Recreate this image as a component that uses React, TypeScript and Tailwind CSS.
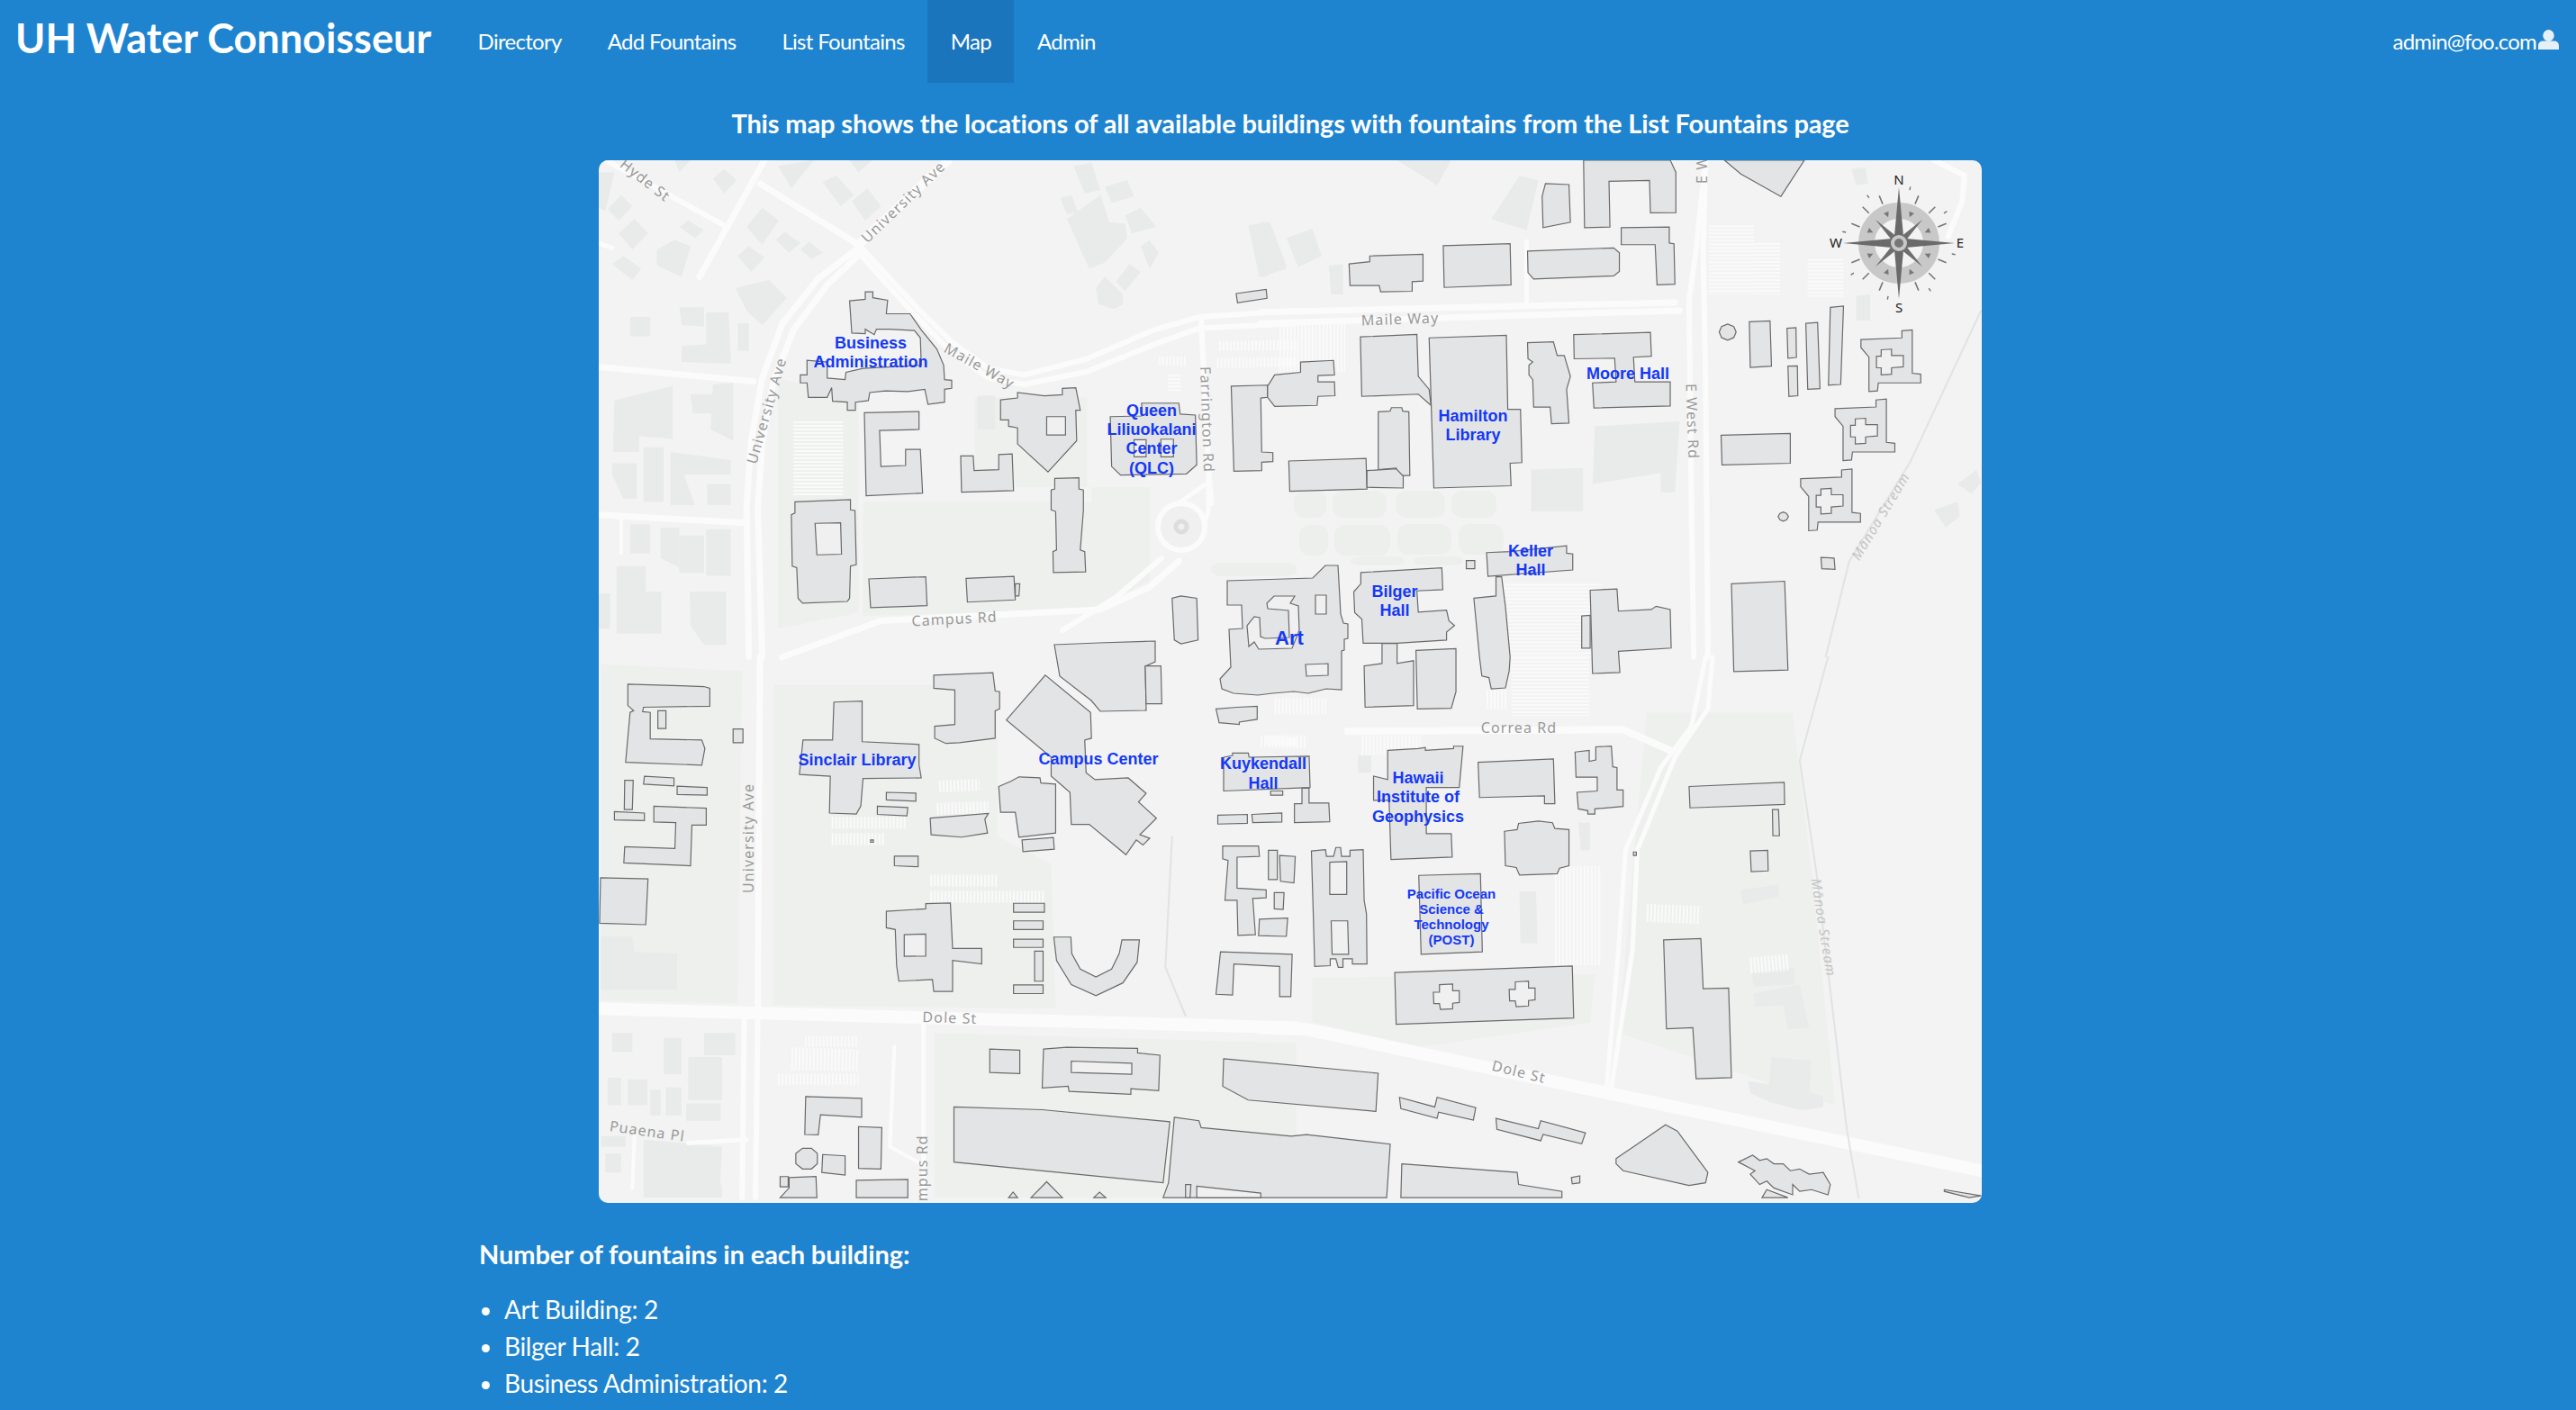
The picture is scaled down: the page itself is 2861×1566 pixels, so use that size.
import React from 'react';

// Map drawing. Shapes are grouped by the survey crop they were traced from,
// each crop has its own origin and x/y scale.
type Sheet = {
  tf: string;
  faint: string[];
  blocks?: string[];
  roads: [string, number][];
  parking?: [number, number, number, number, number][];
  buildings: string[];
  holes?: string[];
};

const sheets: Sheet[] = [
  {
    // page pixels, for what runs across crops
    tf: 'translate(-665,-178)',
    faint: [],
    roads: [['1180,700 1240,663 1290,620', 6], ['1340,537 1293,570', 5], ['1342,510 1342,567 1335,590', 5]],
    buildings: [
      '1363,645 1458,642 1472,628 1486,628 1489,682 1492,692 1497,693 1497,709 1493,710 1493,722 1490,723 1490,766 1473,765 1453,770 1437,768 1413,770 1397,772 1370,770 1357,765 1355,754 1367,741 1365,699 1380,698 1379,672 1363,672',
      '1171,716 1220,714 1283,712 1283,735 1272,740 1273,789 1222,790 1212,778 1177,751',
    ],
    holes: [
      '1415,662 1438,662 1433,670 1442,673 1443,700 1435,720 1398,721 1393,713 1387,718 1385,695 1393,685 1399,686 1400,707 1405,709 1432,708 1431,678 1408,676 1407,670',
      '1461,661 1473,661 1473,682 1461,682', '1450,738 1475,737 1475,750 1451,751',
    ],
  },
  {
    tf: 'translate(-5,-8) scale(0.4975,0.357)',
    blocks: ['600,1085 1110,1085 1110,1420 600,1440', '410,700 590,760 590,1430 410,1480', '1110,1040 1240,1040 1240,1330 1110,1420', '850,760 1100,760 1100,1040 850,1040'],
    faint: [
      '1070,40 1110,30 1130,115 1095,125', '1140,105 1190,85 1205,135 1155,155', '1040,140 1065,130 1080,185 1055,190',
      '1055,205 1130,130 1150,215 1185,220 1190,265 1140,340 1105,360', '1185,195 1220,170 1255,230 1200,250', '1220,290 1240,270 1260,310 1240,360',
      '1165,400 1195,345 1220,370 1185,430', '1120,420 1140,385 1180,440 1180,470 1160,485 1125,470', '1460,225 1505,215 1545,360 1485,385',
      '510,90 540,70 580,130 550,165', '575,150 610,110 640,165 605,210', '340,230 375,170 412,210 375,285', '405,270 425,245 460,280 435,310',
      '460,300 480,275 510,310 485,330', '320,320 345,290 380,325 350,370', '30,175 60,130 85,165 55,210', '55,250 90,205 120,250 85,300',
      '140,300 180,270 215,290 195,385 140,350', '40,345 65,320 105,360 85,395', '265,80 290,50 318,85 290,125', '190,230 210,210 245,240 225,265',
      '315,420 390,395 430,450 375,535 340,490', '190,480 245,480 245,540 195,535', '80,510 125,510 125,570 80,570', '250,495 300,495 305,655 195,650 195,600 250,595',
      '320,530 345,530 345,615 320,615', '45,770 100,750 175,725 175,890 100,880 100,930 42,930', '215,750 265,750 265,810 220,810', '265,720 310,715 310,895 260,860',
      '40,965 95,965 95,1075 65,1075 40,1000', '110,915 155,915 155,1085 110,1085', '170,930 305,955 305,1000 200,1000 225,1095 170,1095', '252,1030 305,1030 305,1095 252,1095',
      '80,1155 125,1155 125,1245 80,1245', '148,1165 190,1165 190,1290 148,1260', '190,1190 245,1190 245,1305 190,1305', '250,1170 305,1170 305,1315 250,1315',
      '50,1285 115,1285 115,1495 50,1495', '110,1365 150,1365 150,1495 110,1495', '213,1365 295,1365 295,1530 245,1530 215,1470', '10,1370 35,1370 35,1480 10,1480',
      '855,755 895,755 895,860 855,860', '180,22 215,22 190,60', '410,40 490,22 440,110', '570,22 620,22 590,60', '10,60 45,60 25,180 10,170',
    ],
    roads: [
      ['30,25 290,225', 6], ['380,22 235,385', 7], ['370,95 590,285', 7], ['590,285 790,22', 10], ['10,280 40,295', 5],
      ['590,295 500,390 420,530 375,700 350,900 340,1100 345,1568', 7], ['600,305 520,410 445,550 400,710 375,900 365,1100 375,1568', 7],
      ['600,300 720,480 800,590 880,670 960,690 1100,640 1250,550 1350,510 1568,490', 6], ['590,310 700,480 790,610 880,700 960,720 1100,680 1250,595 1350,545 1568,530', 6],
      ['10,665 355,710', 7], ['10,1125 330,1150', 7], ['60,1140 60,1245', 4],
      ['420,1568 640,1455 1130,1420 1240,1350 1305,1270', 7], ['1355,520 1372,1000 1378,1090', 6],
    ],
    parking: [[1395, 600, 1568, 597, 11], [1390, 653, 1568, 650, 11], [1260, 647, 1320, 647, 10], [500, 835, 500, 1070, 55], [1295, 690, 1295, 745, 14]],
    buildings: [
      '570,460 605,455 605,432 622,432 622,450 655,458 652,500 705,500 730,550 765,610 780,660 782,705 798,707 798,732 782,735 782,775 745,782 738,735 700,742 650,740 615,745 612,770 583,775 583,800 565,800 565,775 532,772 530,730 520,760 478,760 475,715 460,715 460,690 475,690 475,645 520,650 520,700 560,705 562,682 600,670 730,660 728,575 715,552 660,548 630,548 625,565 605,548 605,562 575,560',
      '603,808 725,804 725,860 637,863 640,975 695,972 695,922 728,922 733,1058 607,1066',
      '907,768 945,762 945,745 1005,755 1045,752 1045,732 1075,730 1085,800 1075,800 1077,895 1013,992 945,905 945,855 925,850 925,830 907,830',
      '818,942 846,942 848,988 903,985 903,938 933,936 936,1050 820,1055',
      '1152,820 1222,818 1222,778 1305,778 1308,812 1342,815 1345,970 1322,998 1175,1002 1155,975',
      '1028,1012 1082,1010 1082,1045 1092,1048 1092,1112 1085,1235 1095,1240 1097,1303 1025,1305 1024,1240 1032,1235 1030,1115 1020,1110 1020,1048 1028,1045',
      '448,1085 572,1078 572,1110 582,1112 585,1280 572,1285 570,1385 565,1395 465,1400 455,1385 452,1290 442,1285 440,1125 448,1120',
      '613,1325 740,1318 743,1408 617,1414', '830,1323 937,1317 940,1390 833,1397', '940,1340 950,1340 948,1378 940,1378',
      '1422,725 1503,722 1503,760 1488,762 1490,930 1515,932 1515,960 1490,962 1490,988 1428,990',
      '1433,437 1500,424 1502,452 1436,466',
      '1290,1385 1310,1378 1345,1385 1348,1515 1310,1527 1295,1515',
    ],
    holes: ['1010,820 1052,820 1052,877 1010,877', '493,1152 550,1150 552,1248 497,1250', '1205,892 1232,892 1232,945 1205,945', '1265,890 1293,890 1293,945 1265,945'],
  },
  {
    tf: 'translate(735,-8) scale(0.523,0.357)',
    faint: ['710,850 890,835 880,1055 850,1055 850,995 705,1030', '1265,445 1295,440 1295,520 1265,520', '490,205 550,70 590,85 565,240', '0,215 20,215 55,350 10,385 0,385', '55,265 110,235 130,320 80,355', '290,22 405,22 375,100', '1480,1030 1520,985 1530,1025 1510,1060', '1430,1110 1480,1085 1485,1130 1455,1165', '1255,50 1285,45 1290,95 1265,100', '145,350 175,345 175,440 150,440', '575,985 685,980 685,1115 575,1115'],
    roads: [
      ['0,495 880,465', 7], ['0,530 890,490', 7], ['945,22 925,300 910,460 915,1100 920,1568', 6], ['945,22 940,300 945,700 950,1568', 6], ['1430,22 1495,70 1490,150 1460,260', 6], ['565,275 565,460', 5],
    ],
    parking: [[1000, 225, 1000, 440, 50], [1075, 280, 1075, 440, 30], [1200, 330, 1200, 450, 40], [40, 605, 180, 605, 55], [620, 1340, 620, 1568, 110]],
    buildings: [
      '188,345 232,338 232,320 345,315 345,398 322,400 322,430 255,432 252,412 190,412', '388,288 530,282 532,410 390,418',
      '567,305 750,295 762,310 762,368 750,382 580,392 568,372', '766,232 868,230 868,280 878,282 880,408 842,410 838,285 766,285',
      '598,135 605,95 655,98 658,215 600,232', '686,22 870,22 882,60 882,185 828,186 826,85 740,88 742,230 688,232', '985,22 1155,22 1105,135 1020,65',
      '358,575 522,567 525,797 552,797 555,963 530,965 532,1035 368,1042', '212,572 332,564 335,695 358,735 362,785 335,750 215,757',
      '567,590 622,587 630,630 645,630 658,695 650,735 655,840 618,842 615,790 580,790 578,705 570,690 570,660 578,650 568,640',
      '665,565 828,558 830,632 792,635 795,712 870,712 870,787 708,793 705,715 755,712 752,638 666,640',
      '30,690 85,682 85,650 155,645 157,690 122,692 122,712 157,712 158,755 122,757 120,785 30,788 15,760 15,725',
      '250,805 275,803 278,792 300,792 302,803 315,805 317,1003 290,1003 288,980 250,985', '60,958 224,950 226,1045 62,1052', '226,988 288,982 303,1005 303,1042 226,1040',
      '1038,525 1082,522 1085,663 1040,667', '1118,545 1137,543 1138,636 1120,638', '1120,663 1140,662 1141,755 1122,757', '1158,530 1183,527 1188,733 1162,735', '1210,480 1238,476 1232,720 1206,722',
      '1275,580 1362,575 1362,553 1384,550 1384,685 1402,688 1402,715 1312,715 1310,740 1292,742 1292,635 1275,605',
      '1220,795 1307,790 1307,768 1329,765 1329,900 1347,903 1347,930 1257,930 1255,955 1237,957 1237,850 1220,820',
      '1147,1013 1234,1008 1234,986 1256,983 1256,1118 1274,1121 1274,1148 1184,1148 1182,1173 1164,1175 1164,1068 1147,1038',
      '974,557 979,540 992,532 1005,540 1010,557 1005,574 992,582 979,574', '1099,1131 1103,1121 1110,1117 1117,1121 1121,1131 1117,1141 1110,1145 1103,1141', '1190,1258 1218,1260 1220,1295 1192,1293',
      '978,878 1125,872 1125,965 980,970', '480,1243 530,1240 650,1222 650,1245 663,1247 663,1297 483,1317', '437,1268 455,1268 455,1293 437,1293',
      '213,1305 385,1290 387,1358 332,1362 335,1428 395,1422 400,1455 412,1470 395,1490 395,1515 290,1525 262,1525 218,1525 215,1450 200,1430 198,1365 213,1340',
      '453,1385 500,1378 500,1318 512,1318 520,1410 530,1568 528,1611 520,1664 490,1667 485,1632 470,1627 465,1568',
      '700,1360 757,1356 760,1425 830,1420 840,1410 870,1420 872,1540 760,1550 763,1616 705,1619', '682,1440 700,1438 700,1540 682,1540', '1000,1340 1113,1332 1120,1608 1005,1613',
    ],
    holes: [
      '1318,612 1340,610 1340,630 1365,630 1365,665 1340,668 1340,688 1318,690 1318,668 1308,668 1308,632 1318,632',
      '1263,827 1285,825 1285,845 1310,845 1310,880 1285,883 1285,903 1263,905 1263,883 1253,883 1253,847 1263,847',
      '1190,1045 1212,1043 1212,1063 1237,1063 1237,1098 1212,1101 1212,1121 1190,1123 1190,1101 1180,1101 1180,1065 1190,1065',
    ],
  },
  {
    tf: 'translate(-5,552) scale(0.4975,0.3827)',
    blocks: ['400,80 900,80 900,520 1020,600 1030,1020 400,1010', '15,20 330,40 320,1005 15,995', '760,1090 1568,1120 1568,1568 760,1568'],
    faint: ['15,810 85,810 90,855 185,860 185,965 15,965', '155,1105 195,1105 195,1210 155,1210', '245,1090 315,1090 315,1155 245,1155', '210,1160 285,1160 285,1285 210,1285', '30,1220 60,1220 60,1300 30,1300', '75,1225 118,1225 118,1300 75,1300', '125,1255 148,1255 148,1330 125,1330', '160,1248 195,1248 195,1330 160,1330', '205,1295 282,1295 282,1345 205,1345', '110,1400 285,1420 280,1568 110,1568', '40,1090 85,1090 85,1145 40,1145', '15,1390 70,1390 70,1420 15,1420', '25,1440 60,1440 60,1495 25,1495', '115,1540 285,1530 285,1568 115,1568'],
    roads: [
      ['370,0 365,1020', 7], ['335,1040 330,1568', 6], ['365,1040 360,1568', 6], ['10,1020 1568,1075', 14], ['735,1065 735,1568', 5], ['210,1410 340,1400', 5], ['90,1385 85,1540', 4], ['670,1130 660,1420 730,1470', 4], ['1290,520 1275,900 1320,1040', 2],
    ],
    parking: [[530, 480, 695, 480, 13], [530, 528, 650, 528, 13], [770, 375, 860, 370, 13], [765, 440, 880, 435, 13], [750, 648, 900, 648, 13], [750, 695, 1005, 695, 13], [470, 1115, 590, 1115, 12], [440, 1165, 590, 1170, 25], [410, 1225, 590, 1225, 12], [1500, 240, 1568, 245, 10]],
    buildings: [
      '75,78 245,85 258,90 258,142 110,145 108,158 125,160 125,237 240,240 247,265 240,313 70,305 80,160 88,155 75,140', '142,155 160,155 160,207 142,207', '310,208 332,208 332,248 310,248',
      '112,345 178,350 178,373 110,368', '185,374 252,378 252,400 185,398', '68,357 87,357 85,442 67,442', '45,448 112,452 112,474 45,472',
      '133,432 250,438 250,487 218,487 215,605 66,597 68,550 180,555 182,480 133,478', '14,640 120,643 115,776 12,772',
      '535,130 598,127 598,245 725,253 725,312 730,350 600,352 595,432 585,455 525,452 527,345 458,340 466,240 532,240',
      '758,52 890,45 895,98 905,100 905,150 895,155 895,235 815,248 785,250 760,235 760,200 805,195 805,95 758,90',
      '1007,52 1108,160 1110,235 1095,240 1098,335 1118,355 1192,350 1232,395 1215,420 1255,467 1218,515 1240,525 1225,545 1210,530 1187,573 1105,485 1065,485 1062,392 1020,345 1020,290 920,182',
      '1230,25 1265,25 1267,135 1232,135', '1388,150 1435,145 1480,142 1480,180 1440,188 1440,195 1395,190',
      '652,392 718,394 718,418 652,414', '632,432 700,436 698,460 632,456', '750,467 880,453 872,470 878,510 820,522 752,515',
      '903,375 930,360 948,347 995,350 997,365 1030,368 1030,510 948,522 940,450 907,450', '955,530 1025,523 1027,557 957,564', '670,577 723,577 723,608 670,605', '617,530 623,530 623,537 617,537',
      '652,737 740,730 740,715 795,713 800,845 865,845 865,890 800,880 800,970 758,970 755,935 680,940 675,895 672,790 652,785',
      '936,714 1005,714 1005,740 936,740', '936,765 1002,765 1002,790 936,790', '936,818 1002,818 1002,842 936,842', '983,853 1002,853 1002,940 983,940', '936,951 1002,951 1002,976 936,976',
      '1026,812 1064,812 1066,860 1085,905 1120,928 1155,905 1172,860 1178,820 1217,820 1212,885 1180,945 1120,982 1065,950 1032,880',
      '1405,290 1425,285 1425,278 1460,278 1462,290 1596,287 1598,378 1405,388', '1510,388 1537,388 1537,400 1510,400', '1392,458 1458,456 1458,482 1392,484', '1468,456 1535,452 1535,478 1470,480',
      '1403,548 1483,548 1485,578 1435,580 1435,670 1500,675 1500,698 1470,700 1476,805 1437,807 1435,705 1408,705 1415,590 1403,585',
      '1505,560 1525,560 1525,645 1505,645', '1530,575 1565,578 1562,655 1532,650', '1518,683 1540,683 1538,732 1518,730', '1485,760 1548,757 1545,810 1483,808',
      '1398,855 1558,862 1555,985 1530,985 1530,897 1428,890 1425,980 1388,978',
      '1405,1165 1750,1207 1745,1318 1460,1285 1403,1245', '803,1305 1000,1313 1285,1348 1270,1525 803,1465', '1295,1335 1350,1345 1355,1365 1556,1390 1590,1385 1777,1413 1769,1568 1270,1568 1282,1525',
      '883,1137 950,1140 950,1208 883,1205', '1003,1137 1055,1132 1213,1135 1213,1148 1263,1155 1260,1258 1198,1252 1198,1268 1060,1260 1058,1245 1000,1250',
      '472,1275 597,1280 597,1335 505,1328 500,1386 470,1385', '590,1362 642,1365 640,1485 590,1483', '450,1440 465,1425 485,1425 498,1440 498,1470 485,1485 465,1485 450,1470',
      '510,1443 560,1447 560,1503 508,1495', '415,1507 433,1507 433,1537 415,1537', '435,1510 495,1507 497,1568 415,1568 435,1540', '585,1518 700,1515 700,1568 585,1568', '975,1568 1010,1522 1045,1568', '925,1568 935,1552 945,1568', '1115,1568 1128,1552 1142,1568',
      '1320,1530 1332,1530 1330,1568 1320,1568',
    ],
    holes: ['692,805 740,803 740,867 692,868', '1065,1172 1200,1178 1200,1210 1065,1205', '1345,1535 1488,1555 1488,1568 1345,1568'],
  },
  {
    tf: 'translate(735,552) scale(0.523,0.3827)',
    blocks: ['110,930 710,920 700,1060 340,1130 110,1060', '820,160 1130,160 1170,620 1220,1300 760,1090'],
    faint: ['1043,915 1135,900 1135,950 1047,955', '1047,975 1145,950 1165,1075 1120,1080 1110,1010 1050,1015', '1020,675 1100,660 1100,695 1025,718', '550,680 585,680 588,830 552,830', '207,285 235,285 235,335 207,335', '675,480 700,480 700,560 680,560', '1085,1160 1170,1170 1165,1260 1195,1275 1195,1305 1150,1315 1080,1290 1040,1265 1035,1230 1080,1240'],
    roads: [
      ['945,0 915,200 850,320 775,560 760,850 735,1250', 5], ['960,0 950,150 880,290 800,560 790,850 745,1250', 5], ['185,215 770,210 870,270', 8],
      ['0,1075 100,1080 720,1260 1530,1490', 14], ['1205,0 1145,300 1180,620 1245,1370 1270,1568', 2],
    ],
    parking: [[590, 0, 590, 170, 60], [660, 0, 660, 170, 40], [480, 122, 525, 122, 22], [30, 142, 140, 142, 18], [215, 255, 340, 255, 22], [625, 750, 725, 750, 110], [820, 742, 935, 748, 20], [1040, 895, 1120, 885, 18], [0, 245, 100, 245, 14]],
    buildings: [
      '220,25 258,18 258,-40 290,-40 290,18 325,10 325,140 222,145', '330,-20 415,-25 415,100 405,148 333,150',
      '88,380 103,380 103,423 145,423 147,477 72,480 72,425 88,425',
      '108,562 138,558 140,578 155,578 160,552 170,552 172,578 190,578 190,560 218,558 220,705 225,745 226,890 195,890 195,875 175,875 175,900 165,900 160,875 148,875 148,895 115,897 112,745',
      '270,270 335,265 350,262 350,270 410,265 410,258 430,258 422,378 352,378 352,512 405,512 407,580 277,587 273,415 240,415 240,345 270,355',
      '462,305 622,295 625,425 603,425 603,402 465,407', '668,275 698,270 698,302 712,298 712,260 745,258 748,318 757,320 757,385 770,385 770,433 710,440 710,455 695,455 695,445 675,440 672,392 715,388 715,348 670,348',
      '518,505 545,500 548,482 590,475 620,480 625,497 655,500 655,605 635,612 630,628 550,632 543,610 520,605', '336,633 467,628 471,855 341,862', '285,915 662,896 665,1047 288,1065',
      '910,375 1112,363 1113,427 912,437', '1087,442 1100,442 1102,518 1088,518', '1040,562 1077,560 1078,620 1042,622', '856,820 935,816 940,962 994,960 1000,1220 925,1223 918,1075 862,1078',
      '295,1277 370,1305 375,1277 457,1307 452,1343 378,1320 375,1338 298,1310', '500,1338 590,1368 595,1345 690,1380 682,1412 600,1385 595,1403 502,1370',
      '755,1455 860,1357 885,1375 950,1495 945,1525 910,1533 770,1490 755,1470',
      '1015,1465 1045,1445 1060,1460 1075,1455 1090,1470 1110,1470 1125,1490 1145,1485 1165,1500 1195,1495 1210,1530 1205,1560 1170,1545 1145,1550 1130,1530 1130,1560 1090,1540 1075,1520 1060,1530 1040,1500 1050,1490',
      '1065,1568 1075,1545 1120,1568',
      '300,1470 545,1495 548,1530 640,1550 640,1568 298,1568', '660,1510 678,1505 678,1525 662,1528', '792,565 798,565 798,575 792,575', '1452,1545 1530,1563 1505,1568 1452,1550',
    ],
    holes: [
      '147,595 183,593 183,688 147,688', '150,765 185,765 187,862 152,862',
      '380,950 408,948 408,968 422,968 422,1002 408,1004 408,1020 382,1022 380,1005 368,1005 367,972 380,972',
      '541,942 569,940 569,960 583,960 583,994 569,996 569,1012 543,1014 541,997 529,997 528,964 541,964',
    ],
  },
];

// lawn patches on the mall, page pixels
const lawns: [number, number, number, number][] = [
  [1437, 545, 36, 30], [1480, 545, 60, 30], [1550, 545, 55, 30], [1612, 545, 50, 30],
  [1443, 583, 32, 34], [1482, 583, 62, 34], [1552, 582, 60, 34], [1620, 582, 50, 34],
  [1345, 625, 95, 15], [1500, 618, 60, 10], [1570, 618, 55, 10],
];

type Label = { x: number; lines: [number, string][]; size: number };

const labels: Label[] = [
  { x: 967, size: 18, lines: [[381, 'Business'], [402, 'Administration']] },
  { x: 1279, size: 18, lines: [[456, 'Queen'], [477, 'Liliuokalani'], [498, 'Center'], [520, '(QLC)']] },
  { x: 1636, size: 18, lines: [[462, 'Hamilton'], [483, 'Library']] },
  { x: 1808, size: 18, lines: [[415, 'Moore Hall']] },
  { x: 1700, size: 18, lines: [[612, 'Keller'], [633, 'Hall']] },
  { x: 1549, size: 18, lines: [[657, 'Bilger'], [678, 'Hall']] },
  { x: 1432, size: 22, lines: [[708, 'Art']] },
  { x: 952, size: 18, lines: [[844, 'Sinclair Library']] },
  { x: 1220, size: 18, lines: [[843, 'Campus Center']] },
  { x: 1403, size: 18, lines: [[848, 'Kuykendall'], [870, 'Hall']] },
  { x: 1575, size: 18, lines: [[864, 'Hawaii'], [885, 'Institute of'], [907, 'Geophysics']] },
  { x: 1612, size: 15, lines: [[992, 'Pacific Ocean'], [1009, 'Science &'], [1026, 'Technology'], [1043, '(POST)']] },
];

const roadNames: [string, number, number, number][] = [
  ['Hyde St', 717, 200, 38], ['University Ave', 1003, 224, -44], ['University Ave', 851, 456, -74], ['Maile Way', 1088, 406, 29],
  ['Farrington Rd', 1341, 466, 88], ['Campus Rd', 1060, 687, -3], ['Maile Way', 1555, 354, -2], ['E West Rd', 1880, 468, 88],
  ['E West Rd', 1890, 162, -90], ['University Ave', 831, 931, -90], ['Dole St', 1055, 1130, 2], ['Dole St', 1687, 1190, 14],
  ['Correa Rd', 1687, 808, 0], ['Puaena Pl', 719, 1256, 8], ['Campus Rd', 1024, 1308, -90],
];

const Compass = () => {
  const ticks = [];
  for (let a = 0; a < 360; a += 22.5) {
    if (a % 90 === 0) continue;
    ticks.push(<line key={a} x1="0" y1={-47} x2="0" y2={-57} stroke="#777" strokeWidth="1.6" transform={`rotate(${a})`} />);
    if (a % 45 !== 0) ticks.push(<line key={`s${a}`} x1="0" y1={-60} x2="0" y2={-64} stroke="#777" strokeWidth="1.4" transform={`rotate(${a - 11})`} />);
  }
  const marks = [22.5, 67.5, 112.5, 157.5, 202.5, 247.5, 292.5, 337.5];
  return (
    <g transform="translate(1444,92)">
      <circle r="36" fill="none" stroke="#c8c8c8" strokeWidth="18" />
      {ticks}
      {marks.map((a) => (
        <path key={a} d="M-3,-37 L3,-37 L0,-31 Z" fill="#777" transform={`rotate(${a})`} />
      ))}
      {[45, 135, 225, 315].map((a) => (
        <path key={a} d="M0,-37 L3.5,-6 L-3.5,-6 Z" fill="#6e6e6e" transform={`rotate(${a})`} />
      ))}
      {[0, 90, 180, 270].map((a) => (
        <path key={a} d="M0,-62 L5,-8 L0,0 L-5,-8 Z" fill="#6a6a6a" transform={`rotate(${a})`} />
      ))}
      <circle r="9" fill="#c8c8c8" />
      <circle r="5" fill="#777" />
      <g fontFamily="'Noto Sans', sans-serif" fontSize="15" fill="#222" textAnchor="middle">
        <text x="0" y="-65">N</text>
        <text x="0" y="77">S</text>
        <text x="-70" y="5">W</text>
        <text x="68" y="5">E</text>
      </g>
    </g>
  );
};

const CampusMap = () => (
  <svg viewBox="0 0 1536 1158" className="block w-full h-full bg-[#f2f3f2]">
    {sheets.map((s, i) => (
      <g key={i} transform={s.tf}>
        {s.blocks?.map((p, j) => <polygon key={j} points={p} fill="#eef0ee" />)}
      </g>
    ))}
    <g transform="translate(-665,-178)">
      {lawns.map(([x, y, w, h]) => (
        <rect key={`${x}-${y}`} x={x} y={y} width={w} height={h} rx="12" fill="#edefed" />
      ))}
    </g>
    {sheets.map((s, i) => (
      <g key={i} transform={s.tf}>
        {s.faint.map((p, j) => <polygon key={j} points={p} fill="#e9eaea" />)}
        {s.parking?.map(([x1, y1, x2, y2, w], j) => (
          <line key={j} x1={x1} y1={y1} x2={x2} y2={y2} stroke="#fafafa" strokeWidth={w} strokeDasharray="2 2" vectorEffect="non-scaling-stroke" />
        ))}
      </g>
    ))}
    {sheets.map((s, i) => (
      <g key={i} transform={s.tf}>
        {s.roads.map(([p, w], j) => (
          <polyline key={j} points={p} fill="none" stroke={w === 2 ? '#e1e3e2' : '#fbfbfb'} strokeWidth={w} strokeLinejoin="round" strokeLinecap="round" vectorEffect="non-scaling-stroke" />
        ))}
      </g>
    ))}
    {/* roundabout */}
    <circle cx="647" cy="407" r="26" fill="#eff0ef" stroke="#fbfbfb" strokeWidth="6" />
    <circle cx="647" cy="407" r="6" fill="none" stroke="#dcdddd" strokeWidth="5" />
    <polyline points="1530,490 1380,960 1250,1270 1200,1568" transform="translate(735,-8) scale(0.523,0.357)" fill="none" stroke="#e1e3e2" strokeWidth="2" vectorEffect="non-scaling-stroke" />
    {sheets.map((s, i) => (
      <g key={i} transform={s.tf}>
        {s.buildings.map((p, j) => (
          <polygon key={j} points={p} fill="#e3e4e5" stroke="#6a6a6a" strokeWidth="1.2" vectorEffect="non-scaling-stroke" />
        ))}
      </g>
    ))}
    {sheets.map((s, i) => (
      <g key={i} transform={s.tf}>
        {s.holes?.map((p, j) => (
          <polygon key={j} points={p} fill="#eff0ef" stroke="#6a6a6a" strokeWidth="1.2" vectorEffect="non-scaling-stroke" />
        ))}
      </g>
    ))}
    <g transform="translate(-665,-178)">
      {roadNames.map(([name, x, y, r], i) => (
        <text key={i} transform={`translate(${x},${y}) rotate(${r})`} textAnchor="middle" dominantBaseline="central" fontFamily="'Noto Sans', sans-serif" fontSize="16" letterSpacing="1.1" fill="#999">
          {name}
        </text>
      ))}
      <text transform="translate(2088,573) rotate(-59)" textAnchor="middle" dominantBaseline="central" fontFamily="'Noto Sans', sans-serif" fontStyle="italic" fontSize="15" letterSpacing="1" fill="#c4c4c4">Mānoa Stream</text>
      <text transform="translate(2026,1030) rotate(81)" textAnchor="middle" dominantBaseline="central" fontFamily="'Noto Sans', sans-serif" fontStyle="italic" fontSize="15" letterSpacing="1" fill="#c4c4c4">Mānoa Stream</text>
      {labels.map((l) =>
        l.lines.map(([y, t]) => (
          <text key={t + y} x={l.x} y={y} textAnchor="middle" dominantBaseline="central" fontFamily="'Liberation Sans', sans-serif" fontWeight="700" fontSize={l.size} fill="#1438f8">
            {t}
          </text>
        ))
      )}
    </g>
    <Compass />
  </svg>
);

const UserIcon = () => (
  <svg viewBox="0 0 23 22" className="w-[23px] h-[22px] mb-[4px] text-[#e6f0f9]" fill="currentColor">
    <ellipse cx="11.5" cy="6.5" rx="6.2" ry="6.5" />
    <path d="M0 22v-4.5a5 5 0 0 1 5-5h13a5 5 0 0 1 5 5V22z" />
  </svg>
);

const navItems = ['Directory', 'Add Fountains', 'List Fountains', 'Map', 'Admin'];
const counts = ['Art Building: 2', 'Bilger Hall: 2', 'Business Administration: 2', 'Campus Center: 2'];

const App: React.FC = () => (
  <div className="h-[1566px] overflow-hidden bg-[#1e84d0] text-white font-['Lato',sans-serif]">
    <nav className="flex items-stretch h-[92px]">
      <div className="pl-[17px] pr-[26px] flex items-center text-[45px] leading-none font-bold pb-[8px]">UH Water Connoisseur</div>
      {navItems.map((item) => (
        <a key={item} className={`flex items-center px-[25.5px] text-[24px] tracking-[-0.7px] ${item === 'Map' ? 'bg-[#1b75bc]' : ''}`}>
          {item}
        </a>
      ))}
      <div className="ml-auto flex items-center pr-[19px] text-[24px] tracking-[-0.8px] gap-[2px]">
        <span>admin@foo.com</span>
        <UserIcon />
      </div>
    </nav>
    <main className="ml-[532px] w-[1802px]">
      <h2 className="mt-[26px] text-center text-[29px] tracking-[-0.14px] leading-[38px] font-bold">This map shows the locations of all available buildings with fountains from the List Fountains page</h2>
      <div className="mt-[22px] mx-auto w-[1536px] h-[1158px] rounded-[10px] overflow-hidden">
        <CampusMap />
      </div>
      <h3 className="mt-[38px] text-[29px] tracking-[-0.1px] leading-[38px] font-bold">Number of fountains in each building:</h3>
      <ul className="mt-[22px] list-disc pl-[28px] text-[28px] tracking-[-0.35px] leading-[41px]">
        {counts.map((c) => (
          <li key={c}>{c}</li>
        ))}
      </ul>
    </main>
  </div>
);

export default App;
